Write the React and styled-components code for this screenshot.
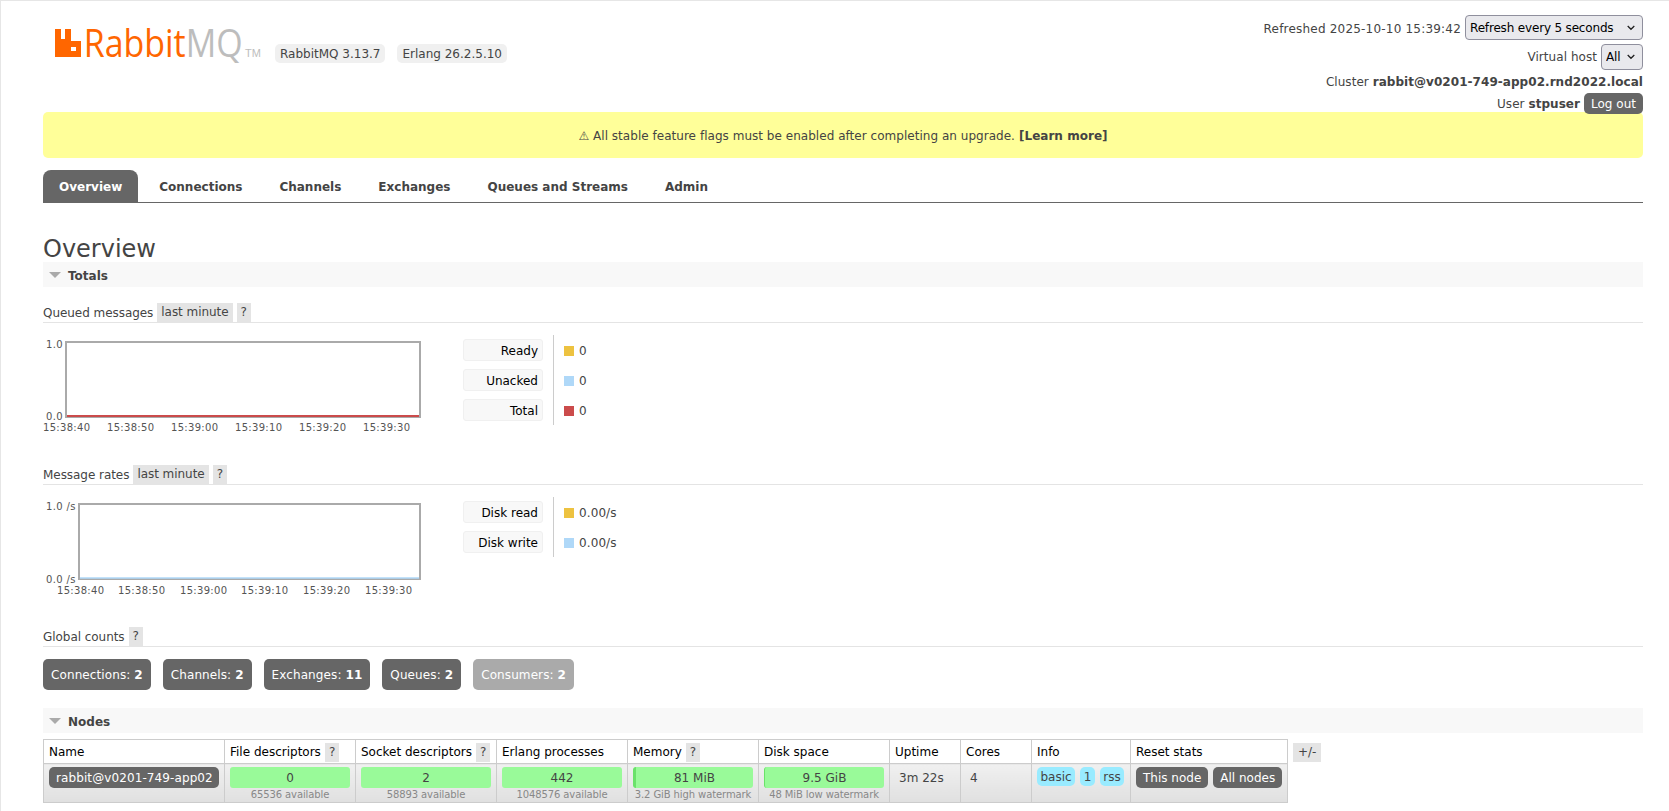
import React from "react";
import styled, { createGlobalStyle } from "styled-components";

const Global = createGlobalStyle`
  html, body { margin: 0; padding: 0; background: #fff; }
  body { font-family: "DejaVu Sans", Verdana, sans-serif; font-size: 12px; color: #444; }
  * { box-sizing: border-box; }
`;

const chevron =
  "data:image/svg+xml,%3Csvg xmlns='http://www.w3.org/2000/svg' width='8' height='6'%3E%3Cpath d='M.7 1l3.300 3.300 3.300-3.300' fill='none' stroke='%23222' stroke-width='1.300'/%3E%3C/svg%3E";

const Page = styled.div`
  border-top: 1px solid #e6e6e6;
  border-left: 1px solid #e6e6e6;
  padding: 0 26px 0 42px;
  min-height: 811px;
`;
const Header = styled.header`
  height: 111px;
  display: flex;
  justify-content: space-between;
  align-items: flex-start;
`;
const Brand = styled.div`
  display: flex;
  align-items: flex-start;
  padding-left: 12px;
`;
const Logo = styled.svg`
  display: block;
  margin-top: 25px;
  margin-right: 10px;
  width: 210px;
  height: 48px;
`;
const Version = styled.span`
  margin: 43px 12px 0 0;
  height: 19px;
  line-height: 21px;
  padding: 0 5px;
  background: #f0f0f0;
  border-radius: 5px;
`;
const Status = styled.div`
  display: flex;
  flex-direction: column;
  align-items: flex-end;
  padding-top: 14px;
  letter-spacing: 0.05px;
`;
const StatusRow = styled.div`
  display: flex;
  align-items: center;
  justify-content: flex-end;
  gap: 4px;
  height: ${(p) => p.$h}px;
  margin-bottom: ${(p) => p.$mb || 0}px;
  position: relative;
  z-index: 1;
`;
const Stamp = styled.span`
  letter-spacing: 0.2px;
  padding-top: 2px;
`;
const NativeSelect = styled.select`
  appearance: none;
  width: ${(p) => p.$w}px;
  height: ${(p) => p.$h}px;
  font: 12px "DejaVu Sans", Verdana, sans-serif;
  letter-spacing: -0.17px;
  color: #000;
  background: #e9e9ed url("${chevron}") no-repeat right 7px center;
  border: 1px solid #8f8f9d;
  border-radius: 4px;
  padding: 0 0 0 4px;
`;
const Logout = styled.button`
  height: 21px;
  width: 59px;
  padding: 0;
  border: 0;
  border-radius: 5px;
  background: #666;
  color: #fff;
  font: 12px "DejaVu Sans", Verdana, sans-serif;
`;
const Flash = styled.div`
  height: 46px;
  padding-top: 2px;
  background: #ffff99;
  border-radius: 5px;
  display: flex;
  align-items: center;
  justify-content: center;
  gap: 4px;
  letter-spacing: 0.03px;
`;
const Tabs = styled.nav`
  margin-top: 12px;
  height: 33px;
  display: flex;
  gap: 5px;
  border-bottom: 1px solid #666;
`;
const Tab = styled.a`
  height: 32px;
  line-height: 29px;
  padding: 3px 16px 0;
  font-weight: bold;
  border-radius: 8px 8px 0 0;
  color: ${(p) => (p.$active ? "#fff" : "#444")};
  background: ${(p) => (p.$active ? "#666" : "transparent")};
`;
const Title = styled.h1`
  margin: 29px 0 0;
  padding-top: 4px;
  font-size: 24px;
  font-weight: normal;
  line-height: 26px;
  color: #444;
`;
const SectionBar = styled.div`
  height: 25px;
  padding: 2px 0 0 6px;
  background: #f8f8f8;
  display: flex;
  align-items: center;
  gap: 7px;
  font-weight: bold;
  font-size: 12px;
  margin-top: ${(p) => p.$mt || 0}px;
`;
const Caret = styled.span`
  width: 0;
  height: 0;
  margin-top: -1px;
  border-left: 6px solid transparent;
  border-right: 6px solid transparent;
  border-top: 6px solid #aaa;
`;
const SubHead = styled.div`
  height: 20px;
  margin-top: ${(p) => p.$mt || 0}px;
  display: flex;
  align-items: center;
  gap: 4px;
  border-bottom: 1px solid #e4e4e4;
  letter-spacing: -0.05px;
`;
const Chip = styled.span`
  height: 19px;
  line-height: 19px;
  padding: 0 4px;
  background: #e4e4e4;
  align-self: flex-start;
  font-weight: normal;
  color: #444;
`;
const ChartRow = styled.div`
  display: flex;
  align-items: flex-start;
  height: 130px;
  margin-top: 12px;
`;
const Chart = styled.svg`
  display: block;
  width: 420px;
  height: 110px;
  flex: none;
`;
const Labels = styled.div`
  width: 91px;
  padding: 4px 10px 4px 0;
  display: flex;
  flex-direction: column;
  gap: 8px;
  border-right: 1px solid #ccc;
`;
const LegendLabel = styled.div`
  height: 22px;
  line-height: 23px;
  padding-right: 4px;
  text-align: right;
  color: #000;
  background: #f8f8f8;
  border: 1px solid #f0f0f0;
  border-radius: 3px;
`;
const Values = styled.div`
  padding-left: 10px;
`;
const LegendValue = styled.div`
  height: 30px;
  padding-top: 2px;
  display: flex;
  align-items: center;
  gap: 5px;
  letter-spacing: 0.1px;
`;
const Swatch = styled.span`
  width: 10px;
  height: 10px;
  margin-top: -1px;
  background: ${(p) => p.$c};
`;
const Counts = styled.div`
  display: flex;
  gap: 12px;
  margin-top: 12px;
`;
const Count = styled.a`
  height: 31px;
  line-height: 32px;
  padding: 0 8px;
  border-radius: 5px;
  letter-spacing: 0.1px;
  color: #fff;
  background: ${(p) => (p.$muted ? "#aaa" : "#666")};
  b { font-weight: bold; }
`;
const NodesWrap = styled.div`
  display: flex;
  align-items: flex-start;
  gap: 5px;
  margin-top: 6px;
`;
const Table = styled.table`
  width: 1244px;
  table-layout: fixed;
  border-collapse: collapse;
  flex: none;
`;
const Th = styled.th`
  height: 24px;
  padding: 1px 5px 0;
  text-align: left;
  font-weight: normal;
  color: #000;
  background: #fff;
  border: 1px solid #ccc;
  white-space: nowrap;
`;
const HelpChip = styled.span`
  display: inline-block;
  height: 19px;
  line-height: 19px;
  padding: 0 4px;
  margin-left: 4px;
  background: #e4e4e4;
  color: #444;
`;
const Td = styled.td`
  height: 39px;
  padding: 3px 5px 0;
  vertical-align: top;
  border: 1px solid #ccc;
  background: linear-gradient(#f0f0f0, #e0e0e0);
  white-space: nowrap;
`;
const Pill = styled.span`
  display: ${(p) => (p.$block ? "block" : "inline-block")};
  height: 21px;
  line-height: 22px;
  padding: 0 7px;
  text-align: center;
  letter-spacing: ${(p) => (p.$block ? "0.1px" : "0")};
  border-radius: 5px;
  background: #666;
  color: #fff;
  margin-right: ${(p) => p.$mr || 0}px;
`;
const Bar = styled.div`
  height: 21px;
  line-height: 22px;
  text-align: center;
  border-radius: 3px;
  background: #99fa99;
  overflow: hidden;
  border-left: ${(p) => (p.$used ? `${p.$used}px solid #6ae26a` : "0")};
`;
const Sub = styled.div`
  font-size: 10px;
  line-height: 13px;
  text-align: center;
  letter-spacing: -0.1px;
  color: #888;
  white-space: nowrap;
`;
const Plain = styled.div`
  padding: 2px 4px;
  line-height: 18px;
`;
const Tag = styled.span`
  display: inline-block;
  height: 19px;
  line-height: 20px;
  padding: 0 3.5px;
  border-radius: 5px;
  background: #99ebff;
  margin-right: 5px;
`;
const Toggle = styled.span`
  height: 19px;
  line-height: 19px;
  margin-top: 4px;
  padding: 0 5px;
  background: #e4e4e4;
`;

const Logomark = () => (
  <Logo viewBox="0 0 210 48" aria-label="RabbitMQ">
    <path
      fill="#ff6600"
      fillRule="evenodd"
      d="M0 3h6v10h4V3h6v12h10v16H0z M16 21h5v4h-5z"
    />
    <g transform="scale(0.87 1)">
      <text x="33" y="31" fontFamily="Open Sans, sans-serif" fontSize="39" fill="#ff6600">
        Rabbit<tspan fill="#bdbdbd">MQ</tspan>
      </text>
    </g>
    <text x="190" y="31" fontFamily="Liberation Sans, sans-serif" fontSize="11" fill="#bdbdbd">TM</text>
  </Logo>
);

const AXIS = { fontSize: 10, fill: "#545454", fontFamily: "DejaVu Sans, sans-serif" };
const times = ["15:38:40", "15:38:50", "15:39:00", "15:39:10", "15:39:20", "15:39:30"];

const Plot = ({ left, top, low, lowY, starts, lineColor, timeY, lx, lineW }) => (
  <Chart viewBox="0 0 420 110">
    <rect x={left + 1} y="7" width={376 - left} height="75" fill="#fff" stroke="#aaa" strokeWidth="2" />
    <line x1={left + 2} x2="376" y1="81" y2="81" stroke={lineColor} strokeWidth={lineW} />
    <text x={lx} y="13" letterSpacing="0.35" {...AXIS}>{top}</text>
    <text x={lx} y={lowY} letterSpacing="0.35" {...AXIS}>{low}</text>
    {times.map((t, i) => (
      <text key={t} x={starts[i]} y={timeY} textLength="47" lengthAdjust="spacing" {...AXIS}>{t}</text>
    ))}
  </Chart>
);

const Legend = ({ rows }) => (
  <>
    <Labels>
      {rows.map((r) => <LegendLabel key={r[0]}>{r[0]}</LegendLabel>)}
    </Labels>
    <Values>
      {rows.map((r) => (
        <LegendValue key={r[0]}><Swatch $c={r[1]} />{r[2]}</LegendValue>
      ))}
    </Values>
  </>
);

const cols = [181, 131, 141, 131, 131, 131, 71, 71, 99, 157];

export default function App() {
  return (
    <Page>
      <Global />
      <Header>
        <Brand>
          <Logomark />
          <Version>RabbitMQ 3.13.7</Version>
          <Version>Erlang 26.2.5.10</Version>
        </Brand>
        <Status>
          <StatusRow $h={25} $mb={4}>
            <Stamp>Refreshed 2025-10-10 15:39:42</Stamp>
            <NativeSelect $w={178} $h={25} defaultValue="5">
              <option value="5">Refresh every 5 seconds</option>
            </NativeSelect>
          </StatusRow>
          <StatusRow $h={26} $mb={2}>
            Virtual host
            <NativeSelect $w={42} $h={26} defaultValue="all">
              <option value="all">All</option>
            </NativeSelect>
          </StatusRow>
          <StatusRow $h={20} $mb={1}>
            <span>Cluster <b>rabbit@v0201-749-app02.rnd2022.local</b></span>
          </StatusRow>
          <StatusRow $h={21}>
            <span>User <b>stpuser</b></span>
            <Logout>Log out</Logout>
          </StatusRow>
        </Status>
      </Header>
      <Flash>
        <span>⚠ All stable feature flags must be enabled after completing an upgrade.</span>
        <b>[Learn more]</b>
      </Flash>
      <Tabs>
        <Tab $active>Overview</Tab>
        <Tab>Connections</Tab>
        <Tab>Channels</Tab>
        <Tab>Exchanges</Tab>
        <Tab>Queues and Streams</Tab>
        <Tab>Admin</Tab>
      </Tabs>
      <Title>Overview</Title>
      <SectionBar><Caret />Totals</SectionBar>

      <SubHead $mt={16}>Queued messages <Chip>last minute</Chip><Chip>?</Chip></SubHead>
      <ChartRow>
        <Plot left={22} top="1.0" low="0.0" lowY={85} lx={3} lineColor="#cb4b4b" lineW={2} timeY={96} starts={[0, 64, 128, 192, 256, 320]} />
        <Legend rows={[["Ready", "#edc240", "0"], ["Unacked", "#afd8f8", "0"], ["Total", "#cb4b4b", "0"]]} />
      </ChartRow>

      <SubHead>Message rates <Chip>last minute</Chip><Chip>?</Chip></SubHead>
      <ChartRow>
        <Plot left={35} top="1.0 /s" low="0.0 /s" lowY={86} lx={3} lineColor="#afd8f8" lineW={1.5} timeY={97} starts={[14, 75, 137, 198, 260, 322]} />
        <Legend rows={[["Disk read", "#edc240", "0.00/s"], ["Disk write", "#afd8f8", "0.00/s"]]} />
      </ChartRow>

      <SubHead>Global counts <Chip>?</Chip></SubHead>
      <Counts>
        <Count>Connections: <b>2</b></Count>
        <Count>Channels: <b>2</b></Count>
        <Count>Exchanges: <b>11</b></Count>
        <Count>Queues: <b>2</b></Count>
        <Count $muted>Consumers: <b>2</b></Count>
      </Counts>

      <SectionBar $mt={18}><Caret />Nodes</SectionBar>
      <NodesWrap>
        <Table>
          <colgroup>{cols.map((w, i) => <col key={i} width={w} />)}</colgroup>
          <thead>
            <tr>
              <Th>Name</Th>
              <Th>File descriptors<HelpChip>?</HelpChip></Th>
              <Th>Socket descriptors<HelpChip>?</HelpChip></Th>
              <Th>Erlang processes</Th>
              <Th>Memory<HelpChip>?</HelpChip></Th>
              <Th>Disk space</Th>
              <Th>Uptime</Th>
              <Th>Cores</Th>
              <Th>Info</Th>
              <Th>Reset stats</Th>
            </tr>
          </thead>
          <tbody>
            <tr>
              <Td><Pill $block>rabbit@v0201-749-app02</Pill></Td>
              <Td><Bar>0</Bar><Sub>65536 available</Sub></Td>
              <Td><Bar>2</Bar><Sub>58893 available</Sub></Td>
              <Td><Bar>442</Bar><Sub>1048576 available</Sub></Td>
              <Td><Bar $used={3}>81 MiB</Bar><Sub>3.2 GiB high watermark</Sub></Td>
              <Td><Bar $used={1}>9.5 GiB</Bar><Sub>48 MiB low watermark</Sub></Td>
              <Td><Plain>3m 22s</Plain></Td>
              <Td><Plain>4</Plain></Td>
              <Td><Tag>basic</Tag><Tag>1</Tag><Tag>rss</Tag></Td>
              <Td><Pill $mr={5}>This node</Pill><Pill>All nodes</Pill></Td>
            </tr>
          </tbody>
        </Table>
        <Toggle>+/-</Toggle>
      </NodesWrap>
    </Page>
  );
}
